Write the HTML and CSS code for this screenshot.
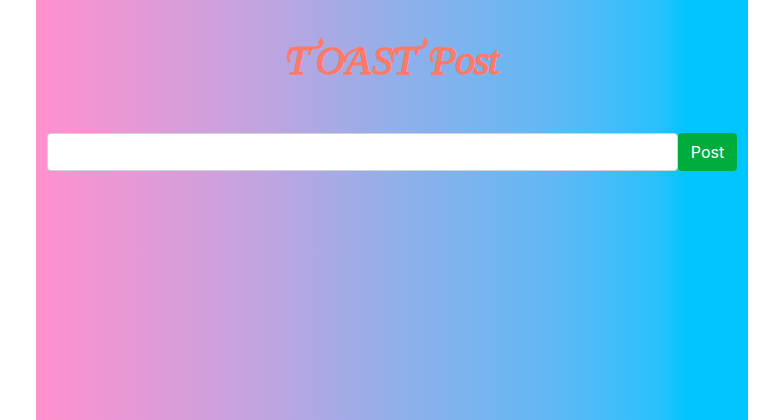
FILE: index.html
```html
<!DOCTYPE html>
<html lang="en">
<head>
<meta charset="utf-8">
<title>TOAST Post</title>
<link rel="stylesheet" href="styles.css">
</head>
<body>
<main class="container">
<h1 class="title"><span class="caps"><span class="initial">T</span>OAST</span> <span class="word">Post</span>
<svg class="flourish" viewBox="0 0 220 54" aria-hidden="true">
<g id="swash"><path d="M5 28C2 21 6 15 14 15H26C33 15 39 14 37 9"/><path d="M35.500 10L37 7L38.500 10"/></g>
<use href="#swash" x="104"/>
<path d="M148 28C145 21 149 15 157 15"/>
<path d="M61 28C60 22 66 18 76 15"/>
</svg></h1>
<form class="post-form">
<input class="post-input" type="text" aria-label="Post">
<button class="post-button" type="button">Post</button>
</form>
</main>
</body>
</html>
```
FILE: styles.css
```css
* { box-sizing: border-box; }
body { margin: 0; background: #fff; overflow: hidden; }
.container {
  width: 712px;
  height: 420px;
  margin-left: 36px;
  padding: 33px 11px 0;
  background: linear-gradient(90deg, #ff91cf 1%, #c5a3df 30%, #8eb0ea 52%, #62b8f3 72%, #2cc1fc 87%, #00c5ff 91.5%);
}
.title {
  position: relative;
  display: flex;
  width: 220px;
  height: 54px;
  margin: 0 0 46px 237px;
  padding-left: 3px;
  white-space: nowrap;
  color: #ff7a66;
  font: italic 400 40px/56px "Liberation Serif", serif;
  -webkit-text-stroke: 1.3px #ff7a66;
}
.caps { width: 145px; letter-spacing: 1.6px; }
.initial { margin-right: 5px; }
.word { letter-spacing: -1.2px; }
.flourish {
  position: absolute;
  inset: 0;
  width: 220px;
  height: 54px;
  fill: none;
  stroke: #ff7a66;
  stroke-width: 2.8;
  stroke-linecap: round;
}
.post-form { display: flex; height: 38px; }
.post-input {
  flex: 1;
  min-width: 0;
  border: 1px solid #ced4da;
  border-radius: 4px;
  background: #fff;
}
.post-button {
  width: 59px;
  padding: 0;
  border: 0;
  border-radius: 4px;
  background: #00ad3c;
  color: #fff;
  font: 400 16px/24px Inter, sans-serif;
}
```
